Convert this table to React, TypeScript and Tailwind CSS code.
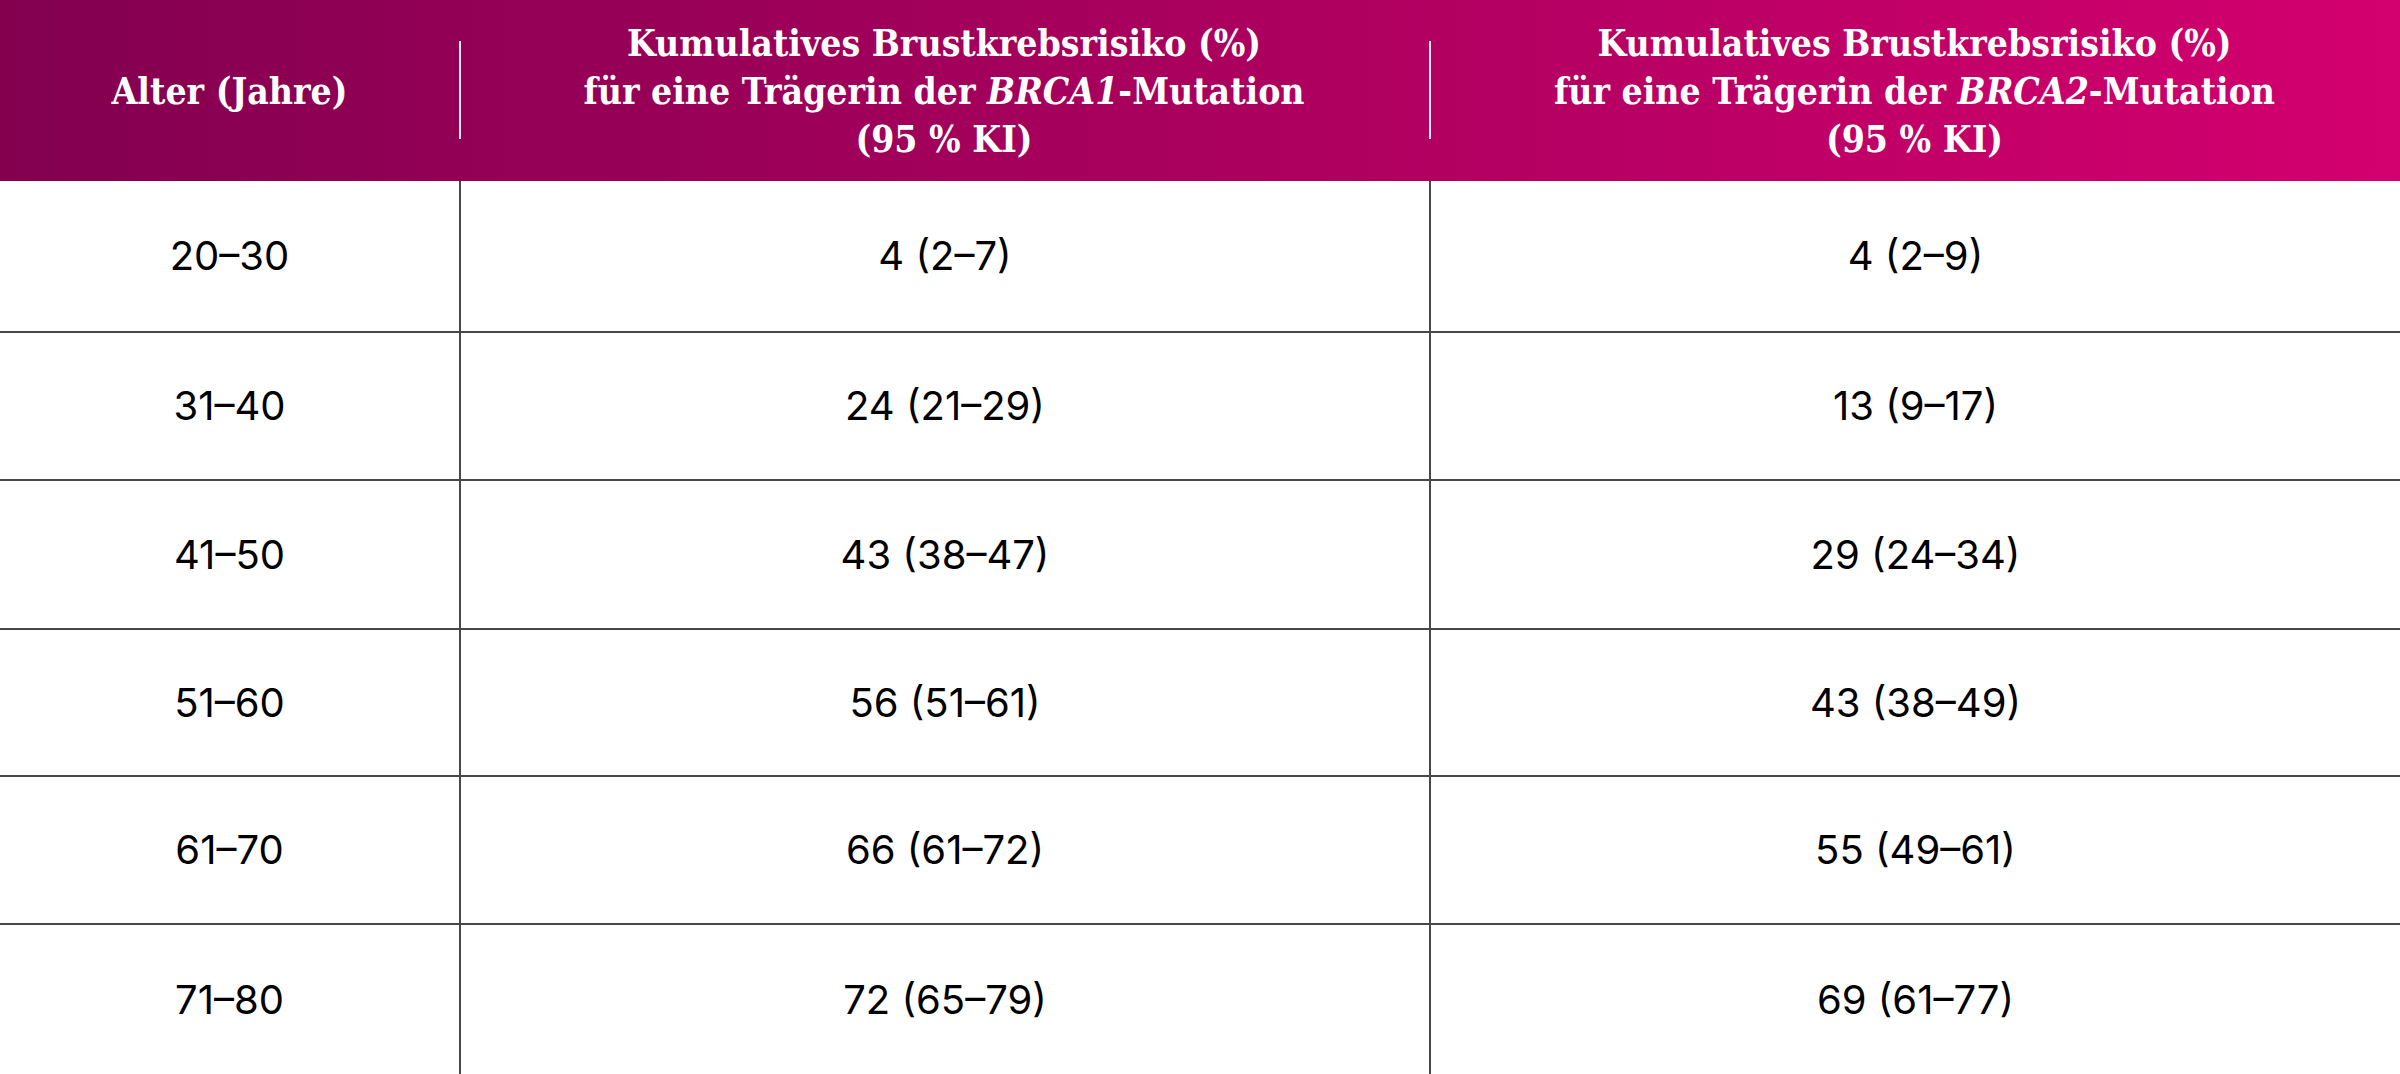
import React from "react";

const rows: [string, string, string, string][] = [
  ["20–30", "4 (2–7)", "4 (2–9)", "h-[152px]"],
  ["31–40", "24 (21–29)", "13 (9–17)", "h-[148px]"],
  ["41–50", "43 (38–47)", "29 (24–34)", "h-[149px]"],
  ["51–60", "56 (51–61)", "43 (38–49)", "h-[147px]"],
  ["61–70", "66 (61–72)", "55 (49–61)", "h-[148px]"],
  ["71–80", "72 (65–79)", "69 (61–77)", "h-[149px]"],
];

function HeaderCell({ gene }: { gene: string }) {
  return (
    <div className="relative flex items-center justify-center">
      <div className="absolute left-0 top-[41px] h-[98px] w-[2px] bg-white/90" />
      <div>
        Kumulatives Brustkrebsrisiko (%)
        <br />
        für eine Trägerin der <i>{gene}</i>-Mutation
        <br />
        (95 % KI)
      </div>
    </div>
  );
}

export default function App() {
  return (
    <div className="w-[2400px] h-[1074px] bg-white overflow-hidden">
      <div
        className="grid grid-cols-[459px_970px_971px] h-[181px] bg-gradient-to-r from-[#83004f] via-[#aa005e] to-[#d3006f] text-white font-bold font-stretch-condensed text-[37px] leading-[48px] text-center"
        style={{ fontFamily: '"DejaVu Serif", serif' }}
      >
        <div className="flex items-center justify-center">Alter (Jahre)</div>
        <HeaderCell gene="BRCA1" />
        <HeaderCell gene="BRCA2" />
      </div>
      <div className="text-[40px] text-black proportional-nums" style={{ fontFamily: "Inter, sans-serif" }}>
        {rows.map((r, i) => (
          <div
            key={i}
            className={`grid grid-cols-[459px_970px_971px] ${r[3]} ${i < rows.length - 1 ? "border-b-2 border-[#474747]" : ""}`}
          >
            <div className="flex items-center justify-center">{r[0]}</div>
            <div className="flex items-center justify-center border-l-2 border-[#474747]">{r[1]}</div>
            <div className="flex items-center justify-center border-l-2 border-[#474747]">{r[2]}</div>
          </div>
        ))}
      </div>
    </div>
  );
}
